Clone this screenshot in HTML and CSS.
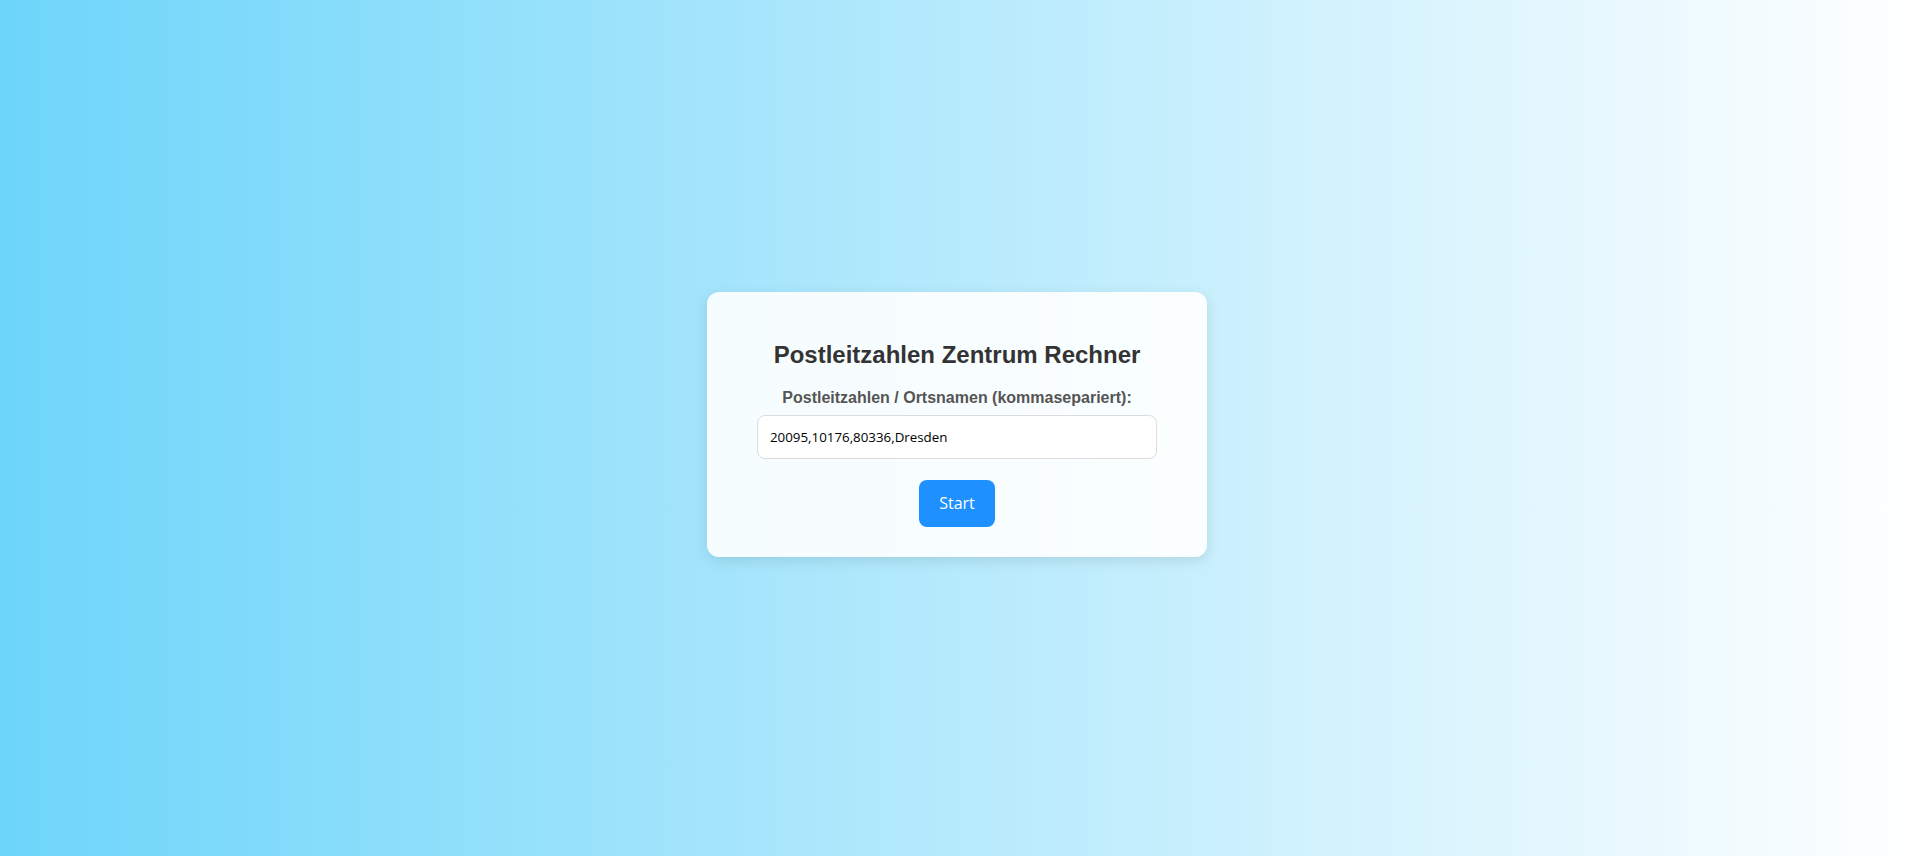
FILE: index.html
```html
<!DOCTYPE html>
<html lang="de">
<head>
<meta charset="utf-8">
<title>Postleitzahlen Zentrum Rechner</title>
<link rel="stylesheet" href="styles.css">
</head>
<body>
<main class="page">
  <div class="card">
    <h1 class="title">Postleitzahlen Zentrum Rechner</h1>
    <label class="label" for="plz">Postleitzahlen / Ortsnamen (kommasepariert):</label>
    <input class="field" id="plz" type="text" value="20095,10176,80336,Dresden">
    <button class="btn" type="button">Start</button>
  </div>
</main>
</body>
</html>
```
FILE: styles.css
```css
html, body {
  margin: 0;
  padding: 0;
}
body {
  font-family: "Liberation Sans", Arial, sans-serif;
  background: linear-gradient(to right, #6dd5fa, #ffffff);
  min-height: 100vh;
}
.page {
  min-height: 100vh;
  display: flex;
  align-items: center;
  justify-content: center;
}
.card {
  width: 500px;
  box-sizing: border-box;
  padding: 30px 50px 30px;
  margin: 0 3px 7px 0;
  background: rgba(255, 255, 255, 0.9);
  border-radius: 12px;
  box-shadow: 0 4px 14px rgba(0, 0, 0, 0.1);
  display: flex;
  flex-direction: column;
  align-items: center;
}
.title {
  margin: 19px 0 20px;
  font-size: 24px;
  font-weight: bold;
  color: #333;
  text-align: center;
}
.label {
  display: block;
  font-size: 16px;
  font-weight: bold;
  color: #555;
  margin-bottom: 8px;
  text-align: center;
}
.field {
  width: 100%;
  box-sizing: border-box;
  padding: 12px;
  border: 1px solid #ddd;
  border-radius: 8px;
  font-family: "Open Sans", sans-serif;
  font-size: 13.33px;
  color: #000;
  background: #fff;
  outline: none;
}
.btn {
  margin-top: 21px;
  padding: 12px 20px;
  border: none;
  border-radius: 8px;
  background: #1e90ff;
  color: #fff;
  font-family: "Open Sans", sans-serif;
  font-size: 16px;
  line-height: 23px;
  cursor: pointer;
}
```
